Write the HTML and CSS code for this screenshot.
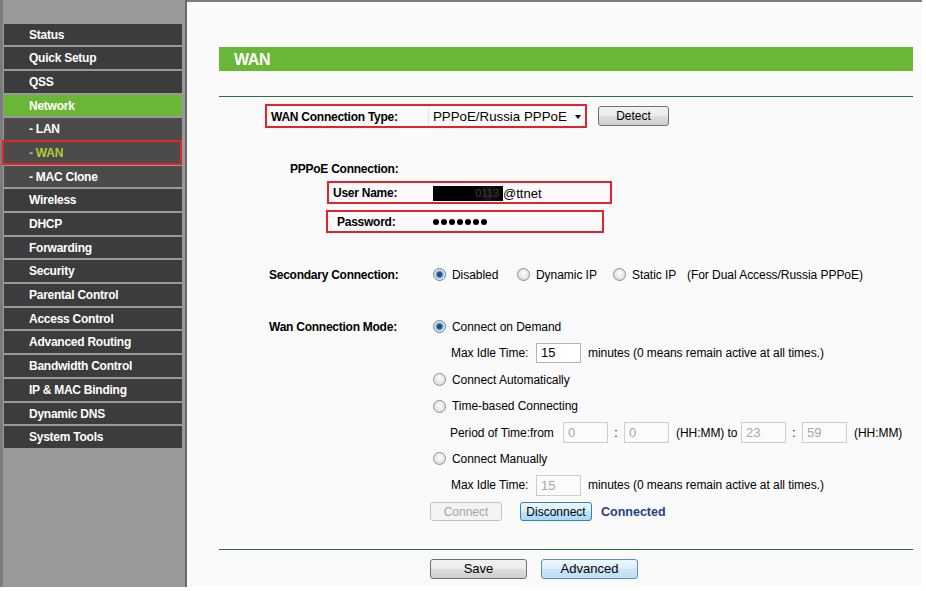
FILE: index.html
```html
<!DOCTYPE html>
<html lang="en">
<head>
<meta charset="utf-8">
<title>WAN</title>
<link rel="stylesheet" href="styles.css">
</head>
<body>
<div class="page">
  <nav class="sidebar">
    <ul class="menu">
      <li>Status</li>
      <li>Quick Setup</li>
      <li>QSS</li>
      <li class="active">Network</li>
      <li class="sub">- LAN</li>
      <li class="sub current">- WAN</li>
      <li class="sub">- MAC Clone</li>
      <li>Wireless</li>
      <li>DHCP</li>
      <li>Forwarding</li>
      <li>Security</li>
      <li>Parental Control</li>
      <li>Access Control</li>
      <li>Advanced Routing</li>
      <li>Bandwidth Control</li>
      <li>IP &amp; MAC Binding</li>
      <li>Dynamic DNS</li>
      <li>System Tools</li>
    </ul>
  </nav>
  <main class="content">
    <div class="title-bar">WAN</div>
    <div class="rule"></div>
    <div class="form">
      <div class="type-row">
        <div class="hl type-box">
          <span class="lbl">WAN Connection Type:</span>
          <div class="select">PPPoE/Russia PPPoE<span class="arrow"></span></div>
        </div>
        <button class="btn detect">Detect</button>
      </div>
      <div class="lbl sub-title">PPPoE Connection:</div>
      <div class="hl user-box">
        <span class="lbl">User Name:</span>
        <span class="value"><span class="redact">0113</span>@ttnet</span>
      </div>
      <div class="hl pass-box">
        <span class="lbl">Password:</span>
        <span class="dots"><i></i><i></i><i></i><i></i><i></i><i></i><i></i></span>
      </div>

      <div class="row secondary">
        <span class="lbl col">Secondary Connection:</span>
        <span class="opt w1"><span class="radio on"></span>Disabled</span>
        <span class="opt w2"><span class="radio"></span>Dynamic IP</span>
        <span class="opt w3"><span class="radio"></span>Static IP</span>
        <span class="txt">(For Dual Access/Russia PPPoE)</span>
      </div>

      <div class="mode">
        <div class="row">
          <span class="lbl col">Wan Connection Mode:</span>
          <span class="opt"><span class="radio on"></span>Connect on Demand</span>
        </div>
        <div class="row indent">
          <span class="idle-lbl">Max Idle Time:</span>
          <span class="input">15</span>
          <span class="after">minutes (0 means remain active at all times.)</span>
        </div>
        <div class="row radio-row">
          <span class="opt"><span class="radio"></span>Connect Automatically</span>
        </div>
        <div class="row radio-row">
          <span class="opt"><span class="radio"></span>Time-based Connecting</span>
        </div>
        <div class="row period">
          <span class="period-lbl">Period of Time:from</span>
          <span class="input dis tall">0</span>
          <span class="colon">:</span>
          <span class="input dis tall">0</span>
          <span class="hh">(HH:MM) to</span>
          <span class="input dis tall">23</span>
          <span class="colon">:</span>
          <span class="input dis tall">59</span>
          <span class="hh2">(HH:MM)</span>
        </div>
        <div class="row radio-row">
          <span class="opt"><span class="radio"></span>Connect Manually</span>
        </div>
        <div class="row indent">
          <span class="idle-lbl">Max Idle Time:</span>
          <span class="input dis tall">15</span>
          <span class="after">minutes (0 means remain active at all times.)</span>
        </div>
        <div class="row buttons">
          <button class="btn small disabled">Connect</button>
          <button class="btn small blue disc">Disconnect</button>
          <span class="status">Connected</span>
        </div>
      </div>
    </div>
    <div class="rule bottom"></div>
    <div class="actions">
      <button class="btn big">Save</button>
      <button class="btn big blue adv">Advanced</button>
    </div>
  </main>
</div>
</body>
</html>
```

FILE: styles.css
```css
* {
  box-sizing: border-box;
}

body {
  margin: 0;
  background: #ffffff;
  font-family: "Liberation Sans", Arial, sans-serif;
  font-size: 12px;
  color: #000;
}

.page {
  display: flex;
  height: 587px;
}

/* ---------- sidebar ---------- */
.sidebar {
  width: 187px;
  height: 587px;
  background: #999999;
  border-left: 3px solid #7c7c7c;
  border-right: 2px solid #6a6a6a;
  padding: 23.5px 3px 0 1px;
}

.menu {
  list-style: none;
  margin: 0;
  padding: 0;
}

.menu li {
  position: relative;
  height: 21.7px;
  line-height: 23px;
  margin-bottom: 2px;
  padding-left: 25px;
  background: #3c3c3c;
  color: #fff;
  font-weight: bold;
  letter-spacing: -0.25px;
  white-space: nowrap;
}

.menu li.sub {
  background: #4b4b4b;
}

.menu li.active {
  background: #6ab636;
}

.menu li.current {
  color: #b0cc3a;
}

.menu li.current::after {
  content: "";
  position: absolute;
  left: -2px;
  right: 0;
  top: -2px;
  bottom: -1px;
  border: 2px solid #e2232b;
}

/* ---------- content ---------- */
.content {
  width: 735px;
  height: 587px;
  background: #fafafa;
  border-top: 2px solid #7d7d7d;
  padding-left: 32px;
}

.title-bar {
  margin-top: 45px;
  width: 694px;
  height: 24px;
  line-height: 26px;
  padding-left: 15px;
  background: #6ab636;
  color: #fff;
  font-weight: bold;
  font-size: 16px;
  letter-spacing: -0.4px;
}

.rule {
  width: 694px;
  height: 1px;
  margin-top: 25px;
  background: #2d6b3c;
}

.rule.bottom {
  margin-top: 25px;
}

.form {
  padding-left: 50px;
}

.lbl {
  font-weight: bold;
  letter-spacing: -0.25px;
  white-space: nowrap;
}

.txt, .opt, .after, .idle-lbl, .period-lbl, .hh, .hh2 {
  letter-spacing: -0.05px;
  white-space: nowrap;
}

.hl {
  display: flex;
  align-items: center;
  padding-top: 1px;
  border: 2px solid #e2232b;
}

.type-row {
  display: flex;
  align-items: center;
  height: 24px;
  margin-top: 7px;
}

.type-box {
  margin-left: -4px;
  width: 322px;
  height: 24px;
}

.type-box .lbl {
  width: 161px;
  padding-left: 4px;
}

.select {
  flex: 1;
  height: 100%;
  display: flex;
  align-items: center;
  padding-left: 4px;
  border-left: 1px solid #e4e4e4;
  font-size: 13.3px;
}

.arrow {
  margin-left: auto;
  margin-right: 4px;
  border-left: 3.5px solid transparent;
  border-right: 3.5px solid transparent;
  border-top: 4px solid #000;
}

.btn {
  font-family: inherit;
  font-size: 12px;
  color: #000;
  height: 19px;
  padding: 0;
  border: 1px solid #707070;
  border-radius: 3px;
  background: linear-gradient(#f3f3f3 0%, #ebebeb 48%, #dddddd 52%, #cfcfcf 100%);
}

.detect {
  margin-left: 11px;
  width: 71px;
  height: 20px;
}

.sub-title {
  margin: 28px 0 0 21px;
  height: 24px;
  line-height: 26px;
}

.user-box {
  margin: 1px 0 0 58px;
  width: 285px;
  height: 23px;
}

.user-box .lbl {
  width: 104px;
  padding-left: 4px;
}

.value {
  display: flex;
  align-items: center;
  font-size: 13px;
}

.redact {
  display: inline-block;
  width: 70px;
  height: 15px;
  line-height: 15px;
  padding-right: 4px;
  background: linear-gradient(90deg, #000 0%, #000 60%, #151515 80%, #000 100%);
  color: #3a3a3a;
  text-align: right;
  font-size: 11px;
}

.pass-box {
  margin: 6px 0 0 57px;
  width: 278px;
  height: 23px;
}

.pass-box .lbl {
  width: 105px;
  padding-left: 9px;
}

.dots {
  display: flex;
  gap: 2px;
}

.dots i {
  width: 6px;
  height: 6px;
  border-radius: 50%;
  background: #000;
}

.row {
  display: flex;
  align-items: center;
  height: 26.4px;
  padding-top: 2px;
  white-space: nowrap;
}

.secondary {
  margin-top: 27.8px;
}

.mode {
  margin-top: 25.6px;
}

.col {
  width: 164px;
}

.opt {
  display: flex;
  align-items: center;
}

.w1 { width: 84px; }
.w2 { width: 96px; }
.w3 { width: 74px; }

.radio {
  flex: none;
  width: 13px;
  height: 13px;
  margin-right: 6px;
  border-radius: 50%;
  border: 1px solid #8f8f8f;
  background: radial-gradient(circle at 50% 40%, #fdfdfd 0%, #e6e6e6 55%, #d2d2d2 100%);
}

.radio.on {
  border-color: #6d7d8c;
  background: radial-gradient(circle, #173f68 0, #2a5f91 2.4px, #7fb0da 3.4px, #d4e6f4 4.6px, #ececec 5.5px);
}

.radio-row {
  padding-left: 164px;
}

.indent {
  padding-left: 182px;
}

.idle-lbl {
  width: 85px;
}

.input {
  width: 45px;
  height: 20px;
  line-height: 18px;
  padding-left: 4px;
  border: 1px solid #b3b3b3;
  background: #fff;
  font-size: 13px;
}

.input.tall {
  height: 21px;
  line-height: 19px;
}

.input.dis {
  border-color: #cdcdcd;
  color: #a8a8a8;
  background: #fbfbfb;
}

.after {
  margin-left: 7px;
}

.period {
  padding-left: 181px;
}

.period-lbl {
  width: 113px;
}

.colon {
  width: 16px;
  text-align: center;
}

.hh {
  width: 72px;
  padding-left: 7px;
}

.hh2 {
  padding-left: 7px;
}

.buttons {
  padding-left: 161px;
}

.btn.small {
  width: 72px;
  height: 19px;
}

.btn.disabled {
  color: #a3a3a3;
  border-color: #c2c2c2;
  background: #f4f4f4;
}

.btn.blue {
  border-color: #3c7fb1;
  background: linear-gradient(#eaf6fd 0%, #d9f0fc 48%, #bee6fd 52%, #a7d9f5 100%);
}

.disc {
  margin-left: 18px;
}

.status {
  margin-left: 9px;
  font-weight: bold;
  font-size: 12.5px;
  color: #1f3f8a;
}

.actions {
  display: flex;
  margin-top: 9px;
  padding-left: 211px;
}

.btn.big {
  width: 97px;
  height: 20px;
  font-size: 13px;
}

.btn.big.blue {
  border-color: #5a8fbf;
  background: linear-gradient(#eef7fd 0%, #dcedfa 50%, #cbe5f8 51%, #c0dff6 100%);
}

.adv {
  margin-left: 14px;
}
```
